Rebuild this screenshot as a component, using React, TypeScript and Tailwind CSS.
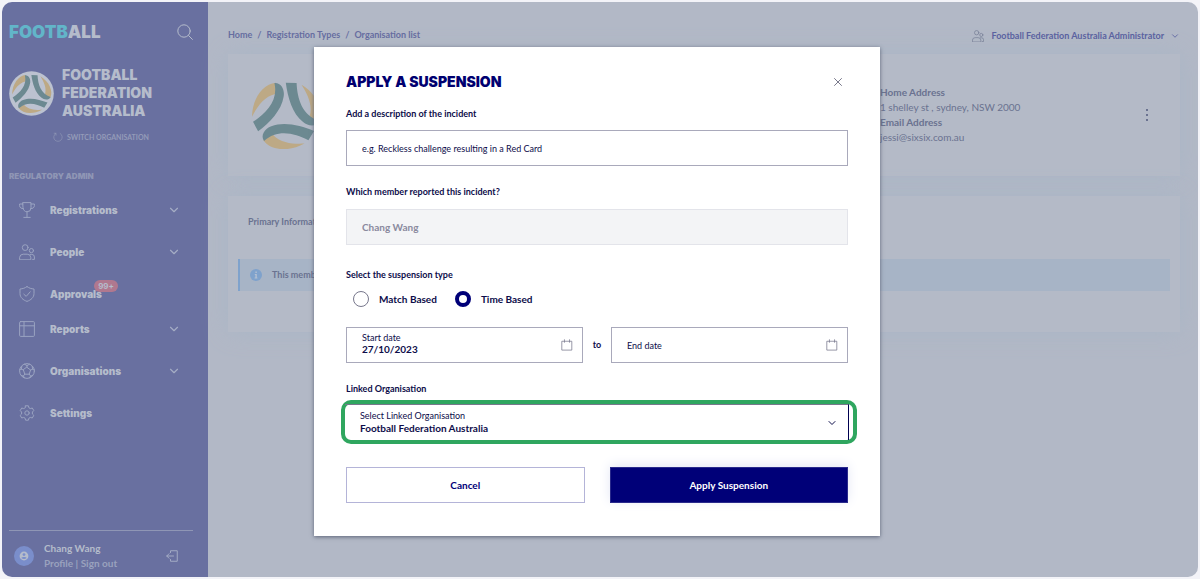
import { useState } from 'react'
import type { ReactNode } from 'react'
import { ChevronDown, X } from 'lucide-react'

type SuspensionType = 'match' | 'time'

interface NavItem {
  label: string
  icon: ReactNode
  expandable?: boolean
  badge?: string
}

function Icon({ children, className = 'size-4' }: { children: ReactNode; className?: string }) {
  return (
    <svg
      viewBox="0 0 16 16"
      fill="none"
      stroke="currentColor"
      strokeWidth="1"
      strokeLinecap="round"
      strokeLinejoin="round"
      className={`shrink-0 ${className}`}
      aria-hidden="true"
    >
      {children}
    </svg>
  )
}

function Crest({ filled = false, className }: { filled?: boolean; className: string }) {
  return (
    <svg viewBox={filled ? '-16 -16 232 232' : '0 0 200 200'} className={`shrink-0 ${className}`} aria-hidden="true">
      {filled && <circle cx="100" cy="100" r="115" fill="#bcc2d0" />}
      {[0, 120, 240].map((angle) => (
        <g key={angle} transform={`rotate(${angle} 100 100)`}>
          <path d="M0 105C1 52 32 8 70 5C75 16 73 29 68 38C34 46 14 78 0 105Z" fill="#bda985" />
          <path d="M3 120C42 95 78 58 66 6C86 4 97 26 93 46C87 86 52 122 18 148Z" fill="#6c8991" />
        </g>
      ))}
    </svg>
  )
}

const peopleIcon = (
  <>
    <circle cx="6.2" cy="3.6" r="2.9" />
    <circle cx="12.4" cy="6.6" r="2.1" />
    <path d="M0.6 15.4V13.4a3.6 3.6 0 0 1 3.6-3.2H8.2a3.6 3.6 0 0 1 3.6 3.2V15.4Z" />
    <path d="M11.2 10.4h1.6a2.6 2.6 0 0 1 2.6 2.6v2.4h-1.8" />
  </>
)

const navItems: NavItem[] = [
  {
    label: 'Registrations',
    expandable: true,
    icon: (
      <>
        <path d="M4 0.6h8v5.2a4 4 0 0 1-8 0Z" />
        <path d="M4 2H0.6v1.6A3 3 0 0 0 4.1 6.6M12 2h3.4v1.6a3 3 0 0 1-3.5 3M8 9.8v5.6M4.8 15.4h6.4" />
      </>
    ),
  },
  { label: 'People', expandable: true, icon: peopleIcon },
  {
    label: 'Approvals',
    badge: '99+',
    icon: (
      <>
        <path d="M8 0.6C10 2.2 12.4 2.8 15 3v4.6c0 3.8-3 6.4-7 7.8c-4-1.4-7-4-7-7.8V3C3.6 2.8 6 2.2 8 0.6Z" />
        <path d="M4.8 8.2l2.4 2.2l4-4.6" />
      </>
    ),
  },
  {
    label: 'Reports',
    expandable: true,
    icon: (
      <>
        <rect x="0.6" y="0.6" width="14.8" height="14.8" rx="1" />
        <path d="M0.6 4.8h14.8M5 0.6v14.8" />
      </>
    ),
  },
  {
    label: 'Organisations',
    expandable: true,
    icon: (
      <>
        <circle cx="8" cy="8" r="7.4" />
        <path d="M8 4.4l3.6 2.6l-1.4 4.2H5.8L4.4 7ZM8 4.4V2.6M11.6 7l2-0.8M10.2 11.2l1.4 1.8M5.8 11.2l-1.4 1.8M4.4 7l-2-0.8" />
        <path d="M5.4 1.2L8 2.6l2.6-1.4M15.2 6.4l-1.6-0.2l-0.4-2.8M13.6 12.6l-2 0.4l-1 1.8M5.4 14.8L4.4 13l-2-0.4M0.8 6.4l1.6-0.2l0.4-2.8" />
      </>
    ),
  },
  {
    label: 'Settings',
    icon: (
      <>
        <circle cx="8" cy="8" r="2.2" />
        <path d="M6.6 0.8h2.8l0.5 2l1.4 0.8l2-0.6l1.5 2.6l-1.4 1.4v2l1.4 1.4l-1.5 2.6l-2-0.6l-1.4 0.8l-0.5 2H6.6l-0.5-2l-1.4-0.8l-2 0.6l-1.5-2.6L2.6 9V7L1.2 5.6L2.7 3l2 0.6l1.4-0.8Z" />
      </>
    ),
  },
]

function Sidebar() {
  return (
    <aside className="flex w-[206px] shrink-0 flex-col bg-[#6970a0] px-[7px] text-[#b5bccb]">
      <div className="flex items-center justify-between pt-5 pr-2">
        <span className="font-['Inter','Lato',sans-serif] text-[17px] leading-5 font-black">
          <span className="text-[#62b5c9]">FOOTB</span>ALL
        </span>
        <button type="button" aria-label="Search">
          <Icon>
            <circle cx="7" cy="7" r="6.2" />
            <path d="M11.6 11.6L15.4 15.4" />
          </Icon>
        </button>
      </div>

      <div className="mt-6 flex items-center gap-2">
        <Crest filled className="size-[45px]" />
        <h2 className="font-['Inter','Lato',sans-serif] text-[14px] leading-[18px] font-black">
          FOOTBALL
          <br />
          FEDERATION
          <br />
          AUSTRALIA
        </h2>
      </div>

      <button
        type="button"
        className="mr-2 flex h-[34px] items-center justify-center gap-1 rounded-full text-[7px] font-bold text-[#949bb8]"
      >
        <Icon className="size-2.5">
          <path d="M11.5 2.3A6.8 6.8 0 1 1 4.6 2.2M4.8 5V2H1.8" />
        </Icon>
        SWITCH ORGANISATION
      </button>

      <h3 className="mt-4 font-['Inter','Lato',sans-serif] text-[8px] leading-3 font-black text-[#8f96b5]">
        REGULATORY ADMIN
      </h3>

      <nav className="mt-[7px] flex flex-col">
        {navItems.map((item) => (
          <a
            key={item.label}
            href="#"
            className={`flex items-center pr-5 pl-[10px] ${item.badge ? 'h-[35px] pt-[7px]' : 'h-[42px]'}`}
          >
            <Icon className="size-4 text-[#9aa3c1]">{item.icon}</Icon>
            <span className="relative ml-[15px] font-['Inter','Lato',sans-serif] text-[10px] leading-4 font-black">
              {item.label}
              {item.badge && (
                <span className="absolute -top-1.5 -right-4 rounded-full bg-[#b0788f] px-[4px] text-[8px] leading-3 font-bold">
                  {item.badge}
                </span>
              )}
            </span>
            {item.expandable && <ChevronDown className="ml-auto size-3.5 text-[#a5adc5]" strokeWidth={2} />}
          </a>
        ))}
      </nav>

      <div className="mt-auto mr-2 flex items-center border-t border-[#8f96b5] pt-[10px] pb-[6px] pl-[5px]">
        <span className="flex size-5 items-center justify-center rounded-full bg-[#7a8ecb]">
          <svg viewBox="0 0 10 10" className="size-2.5" aria-hidden="true">
            <circle cx="5" cy="5" r="4.4" fill="#b5bccb" />
            <circle cx="5" cy="3.6" r="1.4" fill="#7a8ecb" />
            <path d="M2.4 7C3 5.8 7 5.8 7.6 7C6.4 8.4 3.6 8.4 2.4 7Z" fill="#7a8ecb" />
          </svg>
        </span>
        <div className="ml-[10px] text-[10px] leading-[15px] font-bold">
          <div>Chang Wang</div>
          <div className="text-[#9aa2be]">
            <a href="#">Profile</a> | <a href="#">Sign out</a>
          </div>
        </div>
        <button type="button" aria-label="Log out" className="mr-[15px] ml-auto text-[#a5adc5]">
          <Icon className="size-3">
            <path d="M6 3.4V1h9v14H6V12.600M10 8H1M4 5L1 8l3 3" strokeWidth="1.3" />
          </Icon>
        </button>
      </div>
    </aside>
  )
}

function OrganisationPage() {
  return (
    <main className="min-w-0 flex-1 bg-[#b2b8c6] pr-[18px] pl-5 text-[#6a7290]">
      <header className="flex h-[52px] items-center justify-between pt-[14px] font-bold">
        <nav aria-label="Breadcrumb" className="flex gap-[5px] text-[9px] text-[#666da0]">
          <a href="#">Home</a>
          <span>/</span>
          <a href="#">Registration Types</a>
          <span>/</span>
          <a href="#">Organisation list</a>
        </nav>
        <button type="button" className="flex items-center pt-0.5 text-[9px] text-[#5a62a0]">
          <Icon className="mr-[7px] size-3 text-[#7a8198]">{peopleIcon}</Icon>
          Football Federation Australia Administrator
          <ChevronDown className="ml-[6px] size-2.5" strokeWidth={2} />
        </button>
      </header>

      <section className="flex h-[122px] items-center bg-[#b4bac7] px-6 shadow-[0_0_22px_#a9b6c6]">
        <Crest className="size-[68px]" />
        <div className="ml-auto w-[265px] text-[10px] leading-[15px]">
          <div className="font-bold">Home Address</div>
          <div>1 shelley st , sydney, NSW 2000</div>
          <div className="font-bold">Email Address</div>
          <div>jessi@sixsix.com.au</div>
        </div>
        <button type="button" aria-label="More actions" className="mr-[7px]">
          <svg viewBox="0 0 4 12" fill="currentColor" className="h-3 w-1" aria-hidden="true">
            <rect x="1" y="0" width="2" height="2" />
            <rect x="1" y="5" width="2" height="2" />
            <rect x="1" y="10" width="2" height="2" />
          </svg>
        </button>
      </section>

      <section className="mt-5 h-[136px] bg-[#b4bac7] px-[10px] pt-5 shadow-[0_0_22px_#a9b6c6]">
        <h3 className="px-[10px] text-[9px] leading-3 font-bold">Primary Information</h3>
        <div className="mt-[31px] flex h-8 items-center gap-2.5 border-l-2 border-[#7fa2cc] bg-[#a7b4c6] px-[10px] text-[9px] font-bold">
          <svg viewBox="0 0 12 12" className="size-3 shrink-0" aria-hidden="true">
            <circle cx="6" cy="6" r="6" fill="#7fa2cc" />
            <path d="M5.4 2.6h1.400v1.400H5.4ZM4.800 5h2v3.400h.6v1H4.600v-1h.8V6h-.6Z" fill="#b4c0d2" />
          </svg>
          This member
        </div>
      </section>
    </main>
  )
}

function DateField({
  id,
  label,
  value,
  onChange,
}: {
  id: string
  label: string
  value: string
  onChange: (value: string) => void
}) {
  const [focused, setFocused] = useState(false)
  const open = focused || value !== ''

  return (
    <div className="flex h-9 min-w-0 flex-1 items-center border border-[#a9a9bb] pr-[9px] pl-[15px]">
      <div className={`flex min-w-0 flex-1 flex-col ${open ? 'pb-[3px]' : ''}`}>
        <label htmlFor={id} className="text-[9px] leading-[11px]">
          {label}
        </label>
        <input
          id={id}
          value={value}
          onChange={(e) => onChange(e.target.value)}
          onFocus={() => setFocused(true)}
          onBlur={() => setFocused(false)}
          className={`w-full text-[10px] leading-3 font-bold outline-none ${open ? 'h-3' : 'h-0'}`}
        />
      </div>
      <Icon className="size-3 text-[#77778c]">
        <path d="M1.600 3h12.800v11.800H1.600ZM4.600 1v3.400M11.400 1v3.400" />
      </Icon>
    </div>
  )
}

function SuspensionDialog({ onClose }: { onClose: () => void }) {
  const [description, setDescription] = useState('')
  const [type, setType] = useState<SuspensionType>('time')
  const [startDate, setStartDate] = useState('27/10/2023')
  const [endDate, setEndDate] = useState('')

  const radioClass =
    'size-4 appearance-none rounded-full border border-[#77778c] bg-white checked:border-[4px] checked:border-[#000078]'
  const labelClass = 'block text-[9px] leading-3 font-bold'

  return (
    <div className="absolute inset-0 flex items-start justify-center pt-[47px] pr-1.5">
      <form
        role="dialog"
        aria-labelledby="dialog-title"
        onSubmit={(e) => e.preventDefault()}
        className="w-full max-w-[566px] bg-white px-8 pt-6 pb-8 text-[#0d0d4a] shadow-[0_1px_4px_#5c6377]"
      >
        <div className="flex h-[22px] items-center justify-between">
          <h1
            id="dialog-title"
            className="font-['Inter','Lato',sans-serif] text-[14px] leading-5 font-black text-[#000070]"
          >
            APPLY A SUSPENSION
          </h1>
          <button type="button" aria-label="Close" onClick={onClose} className="mr-[3px] text-[#66667a]">
            <X className="size-3.5" strokeWidth={1.5} />
          </button>
        </div>

        <label htmlFor="description" className={`mt-[15px] ${labelClass}`}>
          Add a description of the incident
        </label>
        <input
          id="description"
          value={description}
          onChange={(e) => setDescription(e.target.value)}
          placeholder="e.g. Reckless challenge resulting in a Red Card"
          className="mt-[10px] h-9 w-full border border-[#a9a9bb] px-[15px] text-[9px] outline-none placeholder:text-[#0d0d4a]"
        />

        <label htmlFor="reporter" className={`mt-5 ${labelClass}`}>
          Which member reported this incident?
        </label>
        <input
          id="reporter"
          value="Chang Wang"
          disabled
          className="mt-[11px] h-9 w-full border border-[#e3e4ea] bg-[#f3f4f6] px-[15px] text-[10px] font-bold text-[#8a8a9e]"
        />

        <fieldset className="mt-6">
          <legend className={labelClass}>Select the suspension type</legend>
          <div className="mt-[10px] flex items-center gap-[18px] pl-[7px] text-[10px] leading-4 font-bold">
            <label className="flex items-center gap-2.5">
              <input
                type="radio"
                name="type"
                checked={type === 'match'}
                onChange={() => setType('match')}
                className={radioClass}
              />
              Match Based
            </label>
            <label className="flex items-center gap-2.5">
              <input
                type="radio"
                name="type"
                checked={type === 'time'}
                onChange={() => setType('time')}
                className={radioClass}
              />
              Time Based
            </label>
          </div>
        </fieldset>

        <div className="mt-5 flex items-center">
          <DateField id="start-date" label="Start date" value={startDate} onChange={setStartDate} />
          <span className="w-7 text-center text-[9px] font-bold">to</span>
          <DateField id="end-date" label="End date" value={endDate} onChange={setEndDate} />
        </div>

        <label htmlFor="organisation" className={`mt-5 ${labelClass}`}>
          Linked Organisation
        </label>
        <div className="-mr-[9px] -ml-[5px] mt-[5px] rounded-[10px] border-4 border-[#2fa65f]">
          <div className="relative mr-1 h-9 border-t border-r border-t-[#77778c] border-r-[#000050]">
            <label
              htmlFor="organisation"
              className="pointer-events-none absolute top-[5px] left-[15px] text-[9px] leading-3"
            >
              Select Linked Organisation
            </label>
            <select
              id="organisation"
              className="size-full appearance-none pt-3 pl-[15px] text-[10px] font-bold outline-none"
            >
              <option>Football Federation Australia</option>
            </select>
            <ChevronDown
              className="pointer-events-none absolute top-3 right-[10px] size-3"
              strokeWidth={2}
            />
          </div>
        </div>

        <div className="mt-[23px] flex gap-[25px] pb-px text-[10px] font-bold">
          <button
            type="button"
            onClick={onClose}
            className="h-9 flex-1 border border-[#b4b4d8] text-[#000078]"
          >
            Cancel
          </button>
          <button
            type="submit"
            className="h-9 flex-1 border border-[#2a2a8c] bg-[#000078] text-white shadow-[0_-2px_12px_#e3e6f5]"
          >
            Apply Suspension
          </button>
        </div>
      </form>
    </div>
  )
}

export default function App() {
  const [open, setOpen] = useState(true)

  return (
    <div className="flex min-h-screen bg-[#f3f3f8] p-0.5 font-['Lato','Open_Sans',sans-serif]">
      <div className="flex min-w-0 flex-1 overflow-hidden rounded-[10px]">
        <Sidebar />
        <OrganisationPage />
      </div>
      {open && <SuspensionDialog onClose={() => setOpen(false)} />}
    </div>
  )
}
